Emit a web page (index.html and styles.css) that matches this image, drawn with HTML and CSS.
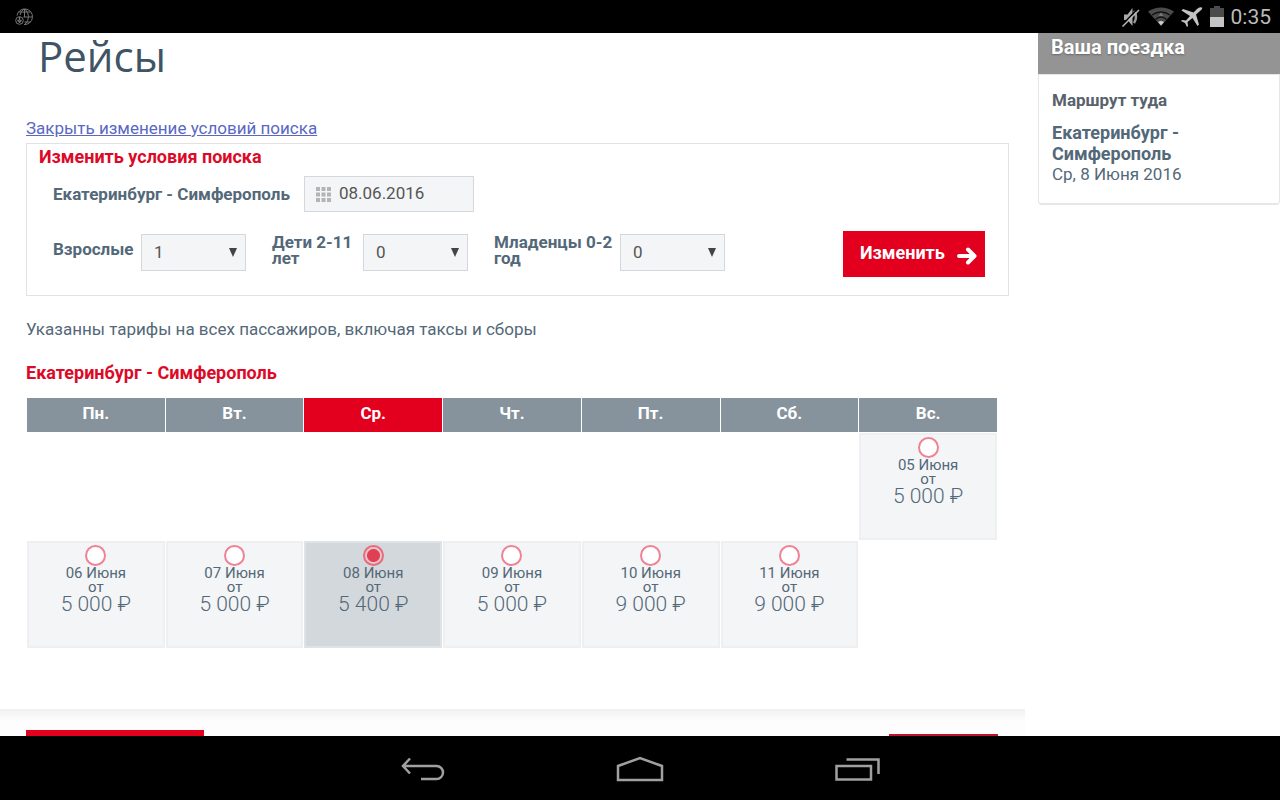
FILE: index.html
```html
<!DOCTYPE html>
<html lang="ru">
<head>
<meta charset="utf-8">
<meta name="viewport" content="width=device-width, initial-scale=1">
<title>Рейсы</title>
<link rel="stylesheet" href="styles.css">
</head>
<body>
<div class="status-bar">
  <svg class="status-globe" width="18" height="18" viewBox="0 0 18 18" fill="none" stroke="#777" stroke-width="1">
    <path d="M2 7.500A7.800 7.800 0 1 1 9 16.500M3.500 4h12M8.500 9H17M9.500 14h6M9.500 1v8M9 1Q5.500 3.500 5 7M10 1q7 7.500 0 15.500"/>
    <circle cx="4.500" cy="12.500" r="3.800"/><path d="M4.500 8.700v3.800M2.500 12l2 2.200 2-2.200" stroke-width="1.300"/>
  </svg>
  <div class="status-icons">
    <svg width="20" height="22" viewBox="0 0 20 22">
      <path d="M3 8.500h3.500L11.500 2v18l-5-6H3z" fill="#aaa"/>
      <path d="M13 5q4 6 0 12" fill="none" stroke="#999" stroke-width="2.500"/>
      <path d="M1 19 17 2.500" stroke="#000" stroke-width="1.500"/><path d="M1.500 20.500 18 4" stroke="#bbb" stroke-width="1.500"/>
    </svg>
    <svg width="26" height="20" viewBox="0 0 26 20">
      <path d="M0 4.500Q13-3.500 26 4.500L13 19z" fill="#4b4b4b"/>
      <path d="M4 8q9-6 18 0M7.500 12.500q5.500-5 11 0" stroke="#111" stroke-width="1.500" fill="none"/>
      <path d="M10.500 9h5l-2.500-3.500z" fill="#777"/><path d="M10 15q3-2 6 0l-3 3.500z" fill="#ccc"/>
    </svg>
    <svg width="22" height="20" viewBox="0 0 22 20">
      <path d="M21 .5Q18.500-.5 16 2l-3.500 3.500L2 2 .5 3.500l8.500 5.500-4 4.500-4-.5-1 1 4 2 2 4 1-1-.5-4 5-4L16.500 19l1.500-1.500-3-10L19 4q3-2 2-3.500z" fill="#c4c4c4"/>
    </svg>
    <svg width="14" height="21" viewBox="0 0 14 21">
      <path d="M4 0h6v2h4v9H0V2h4z" fill="#4b4b4b"/><path d="M0 11h14v10H0z" fill="#c4c4c4"/>
    </svg>
    <span class="clock">0:35</span>
  </div>
</div>

<div class="page">
  <main class="flights">
    <h1 class="title">Рейсы</h1>
    <div class="content">
      <a class="toggle-link" href="#search">Закрыть изменение условий поиска</a>
      <form class="search" id="search">
        <h2 class="search-title">Изменить условия поиска</h2>
        <div class="route-row">
          <label class="field-label" for="date">Екатеринбург - Симферополь</label>
          <span class="date-box">
            <svg width="15" height="15" viewBox="0 0 15 15" fill="#b4b4b4">
              <path d="M0 0h4v4H0zM5.500 0h4v4h-4zM11 0h4v4h-4zM0 5.500h4v4H0zM5.500 5.500h4v4h-4zM11 5.500h4v4h-4zM0 11h4v4H0zM5.500 11h4v4h-4zM11 11h4v4h-4z"/>
            </svg>
            <input class="date-input" id="date" type="text" value="08.06.2016">
          </span>
        </div>
        <div class="people-row">
          <div class="people">
            <label class="field-label label-adult" for="adults">Взрослые</label>
            <span class="select-box"><select class="select" id="adults"><option>1</option><option>2</option></select></span>
          </div>
          <div class="people">
            <label class="field-label label-child" for="children">Дети 2-11 лет</label>
            <span class="select-box"><select class="select" id="children"><option>0</option><option>1</option></select></span>
          </div>
          <div class="people">
            <label class="field-label label-infant" for="infants">Младенцы 0-2 год</label>
            <span class="select-box"><select class="select" id="infants"><option>0</option><option>1</option></select></span>
          </div>
          <button class="submit" type="button">Изменить
            <svg width="20" height="18" viewBox="0 0 20 18" fill="none" stroke="#fff" stroke-width="4" stroke-linecap="round" stroke-linejoin="round"><path d="M2 9h15M11 2.500 17.500 9 11 15.500"/></svg>
          </button>
        </div>
      </form>
      <p class="note">Указанны тарифы на всех пассажиров, включая таксы и сборы</p>
      <h2 class="route-title">Екатеринбург - Симферополь</h2>
      <table class="calendar">
        <thead>
          <tr><th>Пн.</th><th>Вт.</th><th class="current">Ср.</th><th>Чт.</th><th>Пт.</th><th>Сб.</th><th>Вс.</th></tr>
        </thead>
        <tbody>
          <tr>
            <td></td><td></td><td></td><td></td><td></td><td></td>
            <td class="day"><label class="fare"><input class="radio" type="radio" name="day"><span class="date">05 Июня</span><span class="from">от</span><span class="price">5 000 ₽</span></label></td>
          </tr>
          <tr>
            <td class="day"><label class="fare"><input class="radio" type="radio" name="day"><span class="date">06 Июня</span><span class="from">от</span><span class="price">5 000 ₽</span></label></td>
            <td class="day"><label class="fare"><input class="radio" type="radio" name="day"><span class="date">07 Июня</span><span class="from">от</span><span class="price">5 000 ₽</span></label></td>
            <td class="day selected"><label class="fare"><input class="radio" type="radio" name="day" checked><span class="date">08 Июня</span><span class="from">от</span><span class="price">5 400 ₽</span></label></td>
            <td class="day"><label class="fare"><input class="radio" type="radio" name="day"><span class="date">09 Июня</span><span class="from">от</span><span class="price">5 000 ₽</span></label></td>
            <td class="day"><label class="fare"><input class="radio" type="radio" name="day"><span class="date">10 Июня</span><span class="from">от</span><span class="price">9 000 ₽</span></label></td>
            <td class="day"><label class="fare"><input class="radio" type="radio" name="day"><span class="date">11 Июня</span><span class="from">от</span><span class="price">9 000 ₽</span></label></td>
            <td></td>
          </tr>
        </tbody>
      </table>
    </div>
    <div class="actions">
      <button class="action action-back" type="button" aria-label="Назад"></button>
      <button class="action action-next" type="button" aria-label="Далее"></button>
    </div>
  </main>

  <aside class="trip">
    <h2 class="trip-head">Ваша поездка</h2>
    <div class="trip-body">
      <h3 class="trip-sub">Маршрут туда</h3>
      <p class="trip-route">Екатеринбург - Симферополь</p>
      <p class="trip-date">Ср, 8 Июня 2016</p>
    </div>
  </aside>
</div>

<nav class="nav-bar">
  <button class="nav-button" type="button" aria-label="Назад">
    <svg width="44" height="24" viewBox="0 0 44 24" fill="none" stroke="#a0a0a0" stroke-width="2.500"><path d="M2 9h33.500a6.500 6.500 0 0 1 0 13H20M9 1.500 2 9l7 7.500"/></svg>
  </button>
  <button class="nav-button" type="button" aria-label="Домой">
    <svg width="48" height="26" viewBox="0 0 48 26" fill="none" stroke="#a0a0a0" stroke-width="2.500"><path d="M2 24V10L24 2l22 8v14z"/></svg>
  </button>
  <button class="nav-button" type="button" aria-label="Недавние">
    <svg width="46" height="24" viewBox="0 0 46 24" fill="none" stroke="#a0a0a0" stroke-width="2.500"><path d="M1.500 9H36v13.500H1.500zM11.500 2.500h32V17"/></svg>
  </button>
</nav>
</body>
</html>
```
FILE: styles.css
```css
* { box-sizing: border-box; }
body {
  margin: 0;
  height: 100vh;
  display: flex;
  flex-direction: column;
  font-family: Roboto, "Open Sans", sans-serif;
  font-size: 17px;
  color: #536878;
  background: #fff;
}
h1, h2, h3, p { margin: 0; }
button, input, select { font: inherit; }
svg { display: block; flex: none; }

.status-bar {
  flex: none;
  display: flex;
  align-items: center;
  justify-content: space-between;
  height: 33px;
  padding: 0 9px 0 15px;
  background: #000;
}
.status-icons { display: flex; align-items: center; gap: 7px; }
.clock { font-size: 21px; line-height: 33px; padding-top: 1px; color: #bbb; }

.page { flex: 1; min-height: 0; display: flex; overflow: hidden; }
.flights { flex: 1; min-width: 0; }
.title {
  padding-left: 38px;
  font: 400 42px/46px "Open Sans", sans-serif;
  color: #3f5464;
}
.content { padding: 40px 16px 0 26px; }
.toggle-link { display: block; width: fit-content; line-height: 18px; color: #5a68c4; }

.search {
  margin-top: 6px;
  height: 153px;
  padding: 4px 23px 0 12px;
  border: 1px solid #e2e2e2;
}
.search-title { font-size: 18px; line-height: 18px; color: #dc0a28; }
.route-row { display: flex; align-items: center; gap: 14px; padding: 10px 0 0 14px; }
.field-label { font-weight: 700; line-height: 16px; }
.date-box {
  display: flex;
  align-items: center;
  gap: 8px;
  width: 170px;
  height: 36px;
  padding: 0 11px;
  border: 1px solid #d4d7db;
  background: #f4f5f6;
}
.date-input { width: 100%; min-width: 0; padding: 0 0 2px; border: 0; background: none; color: #555; }
.people-row { display: flex; align-items: flex-start; gap: 26px; padding: 19px 0 0 14px; }
.people { display: flex; align-items: flex-start; gap: 7px; padding-top: 3px; }
.label-adult { width: 81px; padding-top: 7px; }
.label-child { width: 84px; }
.label-infant { width: 119px; }
.select-box { position: relative; }
.select {
  display: block;
  width: 105px;
  height: 37px;
  padding: 0 12px 2px;
  border: 1px solid #d4d7db;
  border-radius: 0;
  appearance: none;
  background: #f4f5f6;
  color: #555;
}
.select-box::after {
  content: "";
  position: absolute;
  top: 14px;
  right: 9px;
  width: 8px;
  height: 9px;
  background: #444;
  clip-path: polygon(0 0, 100% 0, 50% 100%);
  pointer-events: none;
}
.submit {
  display: flex;
  align-items: center;
  justify-content: space-between;
  width: 142px;
  height: 46px;
  margin-left: auto;
  padding: 0 8px 3px 17px;
  border: 0;
  background: #e2001e;
  color: #fff;
  font-size: 18px;
  font-weight: 700;
}
.submit svg { margin-top: 6px; }

.note { margin-top: 23px; line-height: 20px; }
.route-title { margin-top: 24px; font-size: 18px; line-height: 20px; color: #dc0a28; }

.calendar {
  width: calc(100% - 11px);
  margin-top: 14px;
  border-spacing: 1px;
  table-layout: fixed;
}
.calendar th { height: 34px; padding: 0 0 5px; background: #87939c; color: #fff; }
.calendar .current { background: #e2001e; }
.calendar td { height: 107px; padding: 0; vertical-align: top; }
.calendar .day { border: 2px solid #eeeff0; background: #f3f5f7; }
.calendar .selected { border-color: #dfe3e5; background: #d3d8dc; }
.fare { display: flex; flex-direction: column; align-items: center; padding-top: 2px; }
.radio {
  width: 21px;
  height: 21px;
  margin: 0;
  border: 2px solid #f08295;
  border-radius: 50%;
  appearance: none;
  background: #fff;
}
.radio:checked { background: radial-gradient(circle, #e04055 6px, #ecc5cc 7px); border-color: #e66c7c; }
.date { font-size: 15px; line-height: 14px; }
.from { font-size: 15px; line-height: 15px; }
.price { font-size: 21px; line-height: 18px; font-weight: 300; }

.actions {
  display: flex;
  align-items: flex-start;
  justify-content: space-between;
  margin-top: 60px;
  padding: 21px 27px 0 26px;
  background: linear-gradient(#f0f0f0, #fdfdfd 12px);
}
.action { height: 46px; padding: 0; border: 0; background: #e2001e; }
.action-back { width: 178px; }
.action-next { width: 109px; margin-top: 4px; background: #be1430; }

.trip { flex: none; width: 242px; margin-left: 13px; }
.trip-head {
  height: 41px;
  padding: 4px 13px 0;
  background: #949494;
  color: #fff;
  font-size: 20px;
  line-height: 20px;
  text-shadow: 0 1px 2px #666;
}
.trip-body {
  padding: 15px 14px 19px 13px;
  border: 1px solid #e6e6e6;
  border-bottom-width: 2px;
  border-radius: 0 0 4px 4px;
}
.trip-sub { font-size: 17px; line-height: 20px; color: #58626c; }
.trip-route { margin-top: 12px; font-size: 18px; line-height: 21px; font-weight: 700; }
.trip-date { line-height: 20px; }

.nav-bar { flex: none; display: flex; align-items: center; justify-content: center; height: 64px; padding-left: 2px; gap: 171px; background: #000; }
.nav-button { padding: 2px 0 0; border: 0; background: none; }
```
